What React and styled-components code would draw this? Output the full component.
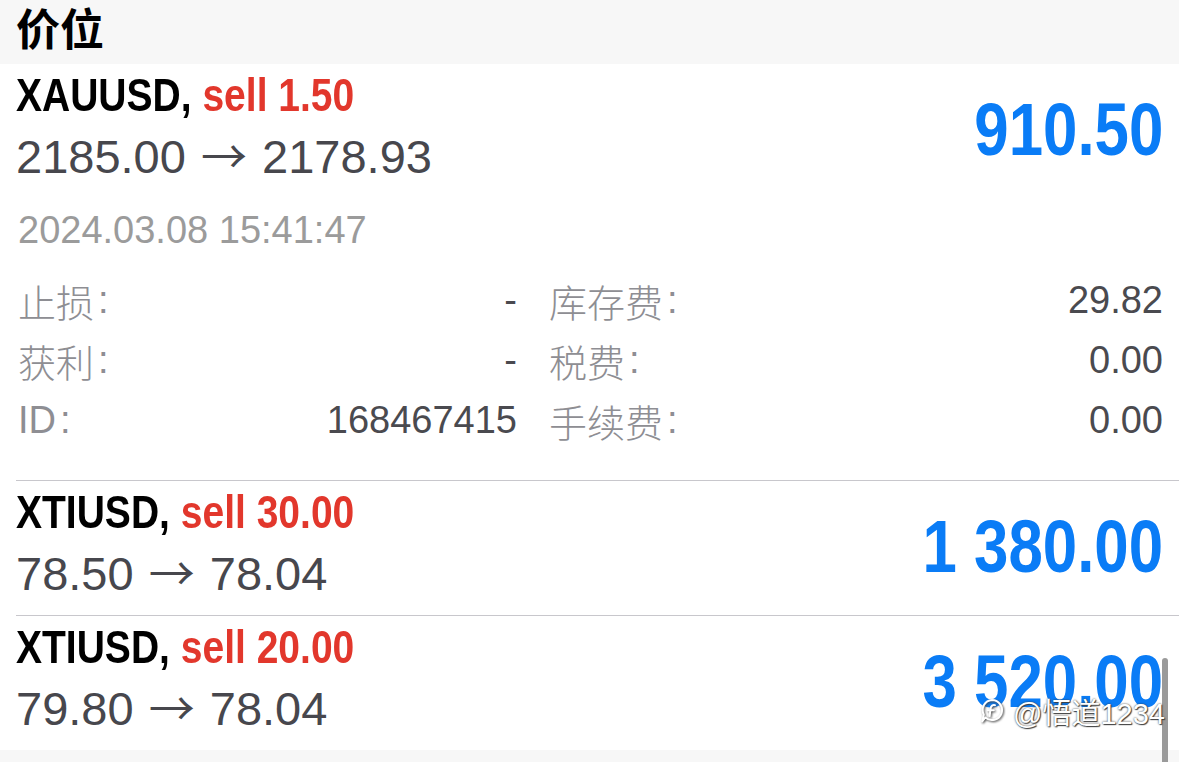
import React from 'react'
import styled, { createGlobalStyle } from 'styled-components'

const GlobalStyle = createGlobalStyle`
  html, body {
    margin: 0;
    padding: 0;
    background: #ffffff;
    overflow: hidden;
  }
  body {
    font-family: "Liberation Sans", "Noto Sans CJK SC", sans-serif;
  }
`

const trades = [
  {
    symbol: 'XAUUSD',
    side: 'sell 1.50',
    open: '2185.00',
    close: '2178.93',
    profit: '910.50',
    time: '2024.03.08 15:41:47',
    details: [
      ['止损', '-', '库存费', '29.82'],
      ['获利', '-', '税费', '0.00'],
      ['ID', '168467415', '手续费', '0.00'],
    ],
  },
  { symbol: 'XTIUSD', side: 'sell 30.00', open: '78.50', close: '78.04', profit: '1 380.00' },
  { symbol: 'XTIUSD', side: 'sell 20.00', open: '79.80', close: '78.04', profit: '3 520.00' },
]

function App() {
  return (
    <>
      <GlobalStyle />
      <Screen>
        <SectionHeader>价位</SectionHeader>
        <List>
          {trades.map((t, i) => (
            <TradeRow key={i} $last={i === trades.length - 1}>
              <Summary>
                <div>
                  <SymbolLine>
                    <Condensed>
                      {t.symbol}, <Side>{t.side}</Side>
                    </Condensed>
                  </SymbolLine>
                  <PriceLine>
                    {t.open} <Arrow>→</Arrow> {t.close}
                  </PriceLine>
                </div>
                <Profit>
                  <ProfitText>{t.profit}</ProfitText>
                </Profit>
              </Summary>
              {t.details && (
                <Details>
                  <Time>{t.time}</Time>
                  <Grid>
                    {t.details.map((d, j) => (
                      <React.Fragment key={j}>
                        <Cell>
                          <Label>
                            {d[0]}
                            <Colon>:</Colon>
                          </Label>
                          <Value>{d[1]}</Value>
                        </Cell>
                        <Cell>
                          <Label>
                            {d[2]}
                            <Colon>:</Colon>
                          </Label>
                          <Value>{d[3]}</Value>
                        </Cell>
                      </React.Fragment>
                    ))}
                  </Grid>
                </Details>
              )}
            </TradeRow>
          ))}
          <Scrollbar />
          <Watermark>
            <svg width="26" height="28" viewBox="0 0 26 28">
              <path
                d="M13 3a10 10 0 1 1 -6.6 17.5 L3.2 24.5 L4.8 17.6 A10 10 0 0 1 13 3z"
                fill="none"
                stroke="#fff"
                strokeWidth="2"
                strokeLinejoin="round"
              />
              <path
                d="M16 8.2c-2.3-0.6-4 0.6-4.4 3.2 L10.6 19 M8.8 13.2h6"
                fill="none"
                stroke="#fff"
                strokeWidth="2"
                strokeLinecap="round"
              />
            </svg>
            <span>@悟道1234</span>
          </Watermark>
        </List>
        <SectionHeader $small />
      </Screen>
    </>
  )
}

const Screen = styled.div`
  width: 1179px;
  height: 762px;
  overflow: hidden;
  background: #fff;
`

const SectionHeader = styled.div`
  height: ${(p) => (p.$small ? '40px' : '64px')};
  box-sizing: border-box;
  padding: 0 16px;
  background: #f7f7f7;
  font-family: "Noto Sans CJK SC", sans-serif;
  font-weight: 700;
  font-size: 44px;
  line-height: 54px;
  color: #000;
`

const List = styled.div`
  position: relative;
`

const TradeRow = styled.div`
  margin-left: 16px;
  padding-right: 16px;
  border-bottom: ${(p) => (p.$last ? 'none' : '1px solid #c8c7cc')};
`

const Summary = styled.div`
  display: flex;
  justify-content: space-between;
  align-items: center;
  padding-bottom: 10px;
`

const SymbolLine = styled.div`
  font-size: 47px;
  line-height: 62px;
  font-weight: 700;
  color: #000;
  white-space: nowrap;
`

const Condensed = styled.span`
  display: inline-block;
  transform: scaleX(0.83);
  transform-origin: left center;
`

const Side = styled.span`
  color: #e2372c;
`

const PriceLine = styled.div`
  font-size: 47px;
  line-height: 62px;
  color: #47474d;
  white-space: nowrap;
`

const Arrow = styled.span`
  font-family: "Noto Sans CJK SC", sans-serif;
  font-size: 46px;
  line-height: 0;
  margin: 0 2px;
`

const Profit = styled.div`
  padding-top: 6px;
`

const ProfitText = styled.span`
  display: inline-block;
  font-size: 74px;
  font-weight: 700;
  color: #0a7cf6;
  white-space: nowrap;
  transform: scaleX(0.835);
  transform-origin: right center;
`

const Details = styled.div`
  padding: 2px 0 30px;
`

const Time = styled.div`
  font-size: 38px;
  line-height: 60px;
  color: #9b9b9b;
  margin-left: 2px;
  margin-bottom: 10px;
`

const Grid = styled.div`
  display: grid;
  grid-template-columns: 501px 1fr;
  column-gap: 30px;
`

const Cell = styled.div`
  display: flex;
  justify-content: space-between;
  align-items: center;
  height: 60px;
  font-size: 38px;
`

const Label = styled.span`
  font-family: "Liberation Sans", "Noto Sans CJK SC", sans-serif;
  font-weight: 300;
  color: #8e8e93;
  margin-left: 2px;
  display: inline-flex;
  align-items: center;
`

const Colon = styled.span`
  font-family: "Liberation Sans", sans-serif;
  margin-left: 4px;
`

const Value = styled.span`
  color: #4a4a4f;
`

const Scrollbar = styled.div`
  position: absolute;
  right: 11px;
  bottom: -20px;
  width: 6px;
  height: 112px;
  border-radius: 3px;
  background: #9a9a9a;
`

const Watermark = styled.div`
  position: absolute;
  right: 14px;
  bottom: 18px;
  display: flex;
  align-items: center;
  gap: 8px;
  font-family: "Liberation Sans", "Noto Sans CJK SC", sans-serif;
  font-size: 29px;
  color: #fff;
  text-shadow: 0 0 2px #333, 1px 1px 1px #444;
  svg {
    filter: drop-shadow(1px 1px 1px #444);
  }
`

export default App
